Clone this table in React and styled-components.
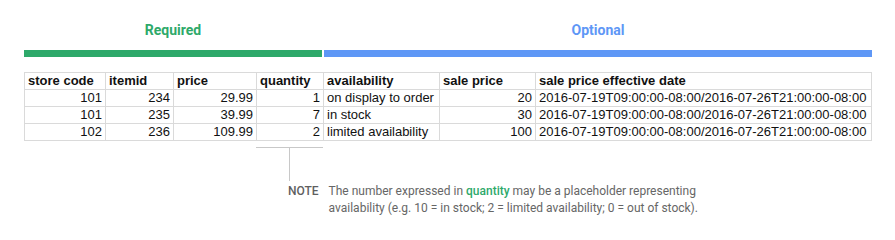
import styled, { createGlobalStyle } from "styled-components";

const GlobalStyle = createGlobalStyle`
  body {
    margin: 0;
    background: #fff;
  }
`;

const columns = [
  { key: "store", label: "store code", width: 81, align: "right" },
  { key: "item", label: "itemid", width: 68, align: "right" },
  { key: "price", label: "price", width: 83, align: "right" },
  { key: "qty", label: "quantity", width: 67, align: "right" },
  { key: "avail", label: "availability", width: 116, align: "left" },
  { key: "sale", label: "sale price", width: 96, align: "right" },
  { key: "date", label: "sale price effective date", width: 336, align: "left" },
];

const dates = "2016-07-19T09:00:00-08:00/2016-07-26T21:00:00-08:00";

const rows = [
  { store: 101, item: 234, price: "29.99", qty: 1, avail: "on display to order", sale: 20, date: dates },
  { store: 101, item: 235, price: "39.99", qty: 7, avail: "in stock", sale: 30, date: dates },
  { store: 102, item: 236, price: "109.99", qty: 2, avail: "limited availability", sale: 100, date: dates },
];

export default function App() {
  return (
    <>
      <GlobalStyle />
      <Page>
        <Groups>
          <Group $width={298}>
            <GroupLabel $color="#2ea96a">Required</GroupLabel>
            <GroupBar $color="#2ea96a" />
          </Group>
          <Group $width={548}>
            <GroupLabel $color="#5e97f6">Optional</GroupLabel>
            <GroupBar $color="#5e97f6" />
          </Group>
        </Groups>

        <Sheet>
          <colgroup>
            {columns.map((c) => (
              <col key={c.key} style={{ width: c.width }} />
            ))}
          </colgroup>
          <thead>
            <tr>
              {columns.map((c) => (
                <HeadCell key={c.key}>{c.label}</HeadCell>
              ))}
            </tr>
          </thead>
          <tbody>
            {rows.map((row, i) => (
              <tr key={i}>
                {columns.map((c) => (
                  <Cell key={c.key} $align={c.align}>
                    {row[c.key]}
                  </Cell>
                ))}
              </tr>
            ))}
          </tbody>
        </Sheet>

        <Bracket>
          <Stem />
        </Bracket>

        <Note>
          <NoteLabel>NOTE</NoteLabel>
          <NoteText>
            The number expressed in <Highlight>quantity</Highlight> may be a
            placeholder representing
            <br />
            availability (e.g. 10 = in stock; 2 = limited availability; 0 = out
            of stock).
          </NoteText>
        </Note>
      </Page>
    </>
  );
}

const Page = styled.div`
  width: 895px;
  height: 240px;
  padding-left: 24px;
  box-sizing: border-box;
  overflow: hidden;
`;

const Groups = styled.div`
  display: flex;
  gap: 2px;
  padding-top: 21px;
  width: 848px;
`;

const Group = styled.div`
  width: ${(p) => p.$width}px;
  display: flex;
  flex-direction: column;
  align-items: center;
  gap: 11px;
`;

const GroupLabel = styled.div`
  font-family: Roboto, "Liberation Sans", sans-serif;
  font-weight: 700;
  font-size: 14px;
  line-height: 18px;
  color: ${(p) => p.$color};
`;

const GroupBar = styled.div`
  width: 100%;
  height: 7px;
  background: ${(p) => p.$color};
`;

const Sheet = styled.table`
  margin-top: 15px;
  border-collapse: collapse;
  table-layout: fixed;
  width: 847px;
  font-family: "Liberation Sans", Arial, sans-serif;
  font-size: 13px;
  color: #111;
`;

const HeadCell = styled.th`
  border: 1px solid #dadada;
  padding: 0 3px;
  height: 16px;
  line-height: 16px;
  text-align: left;
  font-weight: 700;
  white-space: nowrap;
  overflow: hidden;
`;

const Cell = styled.td`
  border: 1px solid #dadada;
  padding: 0 3px;
  height: 16px;
  line-height: 16px;
  text-align: ${(p) => p.$align};
  white-space: nowrap;
  overflow: hidden;
`;

const Bracket = styled.div`
  margin: 6px 0 0 232px;
  width: 67px;
  border-top: 1px solid #c8c8c8;
  display: flex;
  justify-content: center;
`;

const Stem = styled.div`
  width: 1px;
  height: 33px;
  background: #c8c8c8;
`;

const Note = styled.div`
  display: flex;
  gap: 10px;
  margin: 2px 0 0 264px;
  font-family: Roboto, "Liberation Sans", sans-serif;
  font-size: 12px;
  line-height: 17px;
  color: #666;
`;

const NoteLabel = styled.div`
  font-weight: 500;
  color: #5f5f5f;
`;

const NoteText = styled.div`
  white-space: nowrap;
`;

const Highlight = styled.span`
  color: #2ea96a;
  font-weight: 500;
`;
